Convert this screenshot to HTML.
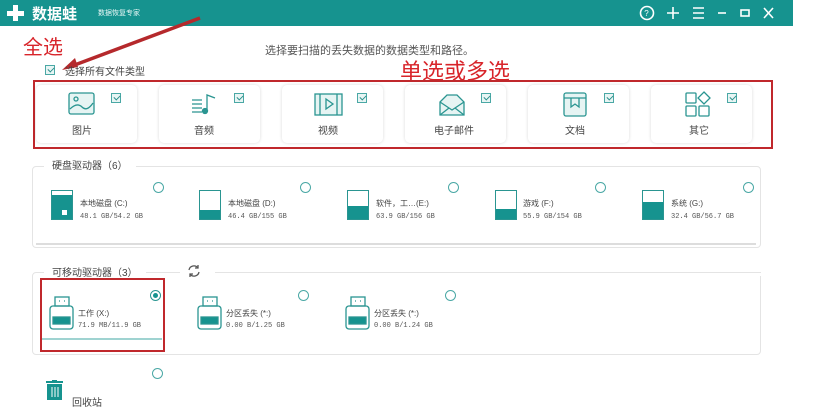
<!DOCTYPE html>
<html><head><meta charset="utf-8">
<style>
*{margin:0;padding:0;box-sizing:border-box}
body{width:815px;height:400px;overflow:hidden;background:#fff;font-family:"Liberation Sans","Noto Sans CJK SC",sans-serif;position:relative;color:#444}
.a{position:absolute}
.bar{left:0;top:0;width:793px;height:26px;background:#16938f}
.t{font-size:10px;color:#444;white-space:nowrap}
.s{font-size:7px;color:#555;white-space:nowrap;font-family:"Liberation Mono","Noto Sans CJK SC",monospace}
.card{background:#fff;border-radius:5px;box-shadow:0 0 3px rgba(0,0,0,.15);width:101px;height:58px;top:85px}
.cb{width:10px;height:10px;border:1px solid #4aa8a5;background:#e8f5f4}
.cb:after{content:"";position:absolute;left:2px;top:1px;width:5px;height:3px;border-left:1.5px solid #2b8f8b;border-bottom:1.5px solid #2b8f8b;transform:rotate(-45deg)}
.rad{width:11px;height:11px;border:1.3px solid #4aa8a5;border-radius:50%;background:#fff}
.disk{width:22px;height:30px;border:1.5px solid #2a9591;background:#fff}
.disk i{position:absolute;left:0;right:0;bottom:0;background:#16938f}
.grp{border:1px solid #e4e4e4;border-radius:4px}
.red{border:2px solid #c0282c}
</style></head><body>
<div class="a bar"></div>
<svg class="a" style="left:6px;top:4px" width="20" height="18"><path d="M7 1h5v6h6v5h-6v5H7v-5H1V7h6z" fill="#fff"/></svg>
<div class="a" style="left:32px;top:3px;font-size:15px;font-weight:bold;color:#fff">数据蛙</div>
<div class="a" style="left:98px;top:8px;font-size:7px;color:#e8f7f6">数据恢复专家</div>
<svg class="a" style="left:638px;top:4px" width="150" height="18" fill="none" stroke="#fff" stroke-width="1.6">
<circle cx="9" cy="9" r="6.5"/><text x="6.3" y="12" font-size="8" fill="#fff" stroke="none" font-family="Liberation Sans">?</text>
<path d="M35 3v12M29 9h12"/><path d="M55 4h11M55 9h11M55 14h11"/><path d="M80 9h8"/><rect x="103" y="6" width="8" height="6"/><path d="M126 4l9 10M135 4l-9 10"/>
</svg>
<div class="a" style="left:23px;top:31px;font-size:20px;color:#d8242a">全选</div>
<div class="a t" style="left:265px;top:42px;font-size:11px;color:#555">选择要扫描的丢失数据的数据类型和路径。</div>
<div class="a" style="left:400px;top:54px;font-size:22px;color:#d8242a">单选或多选</div>
<svg class="a" style="left:0;top:0" width="815" height="400"><path d="M200 18L72 66" stroke="#b5292c" stroke-width="3.5"/><path d="M62 70l13-12 3 9z" fill="#b5292c"/></svg>
<div class="a cb" style="left:45px;top:65px"></div>
<div class="a t" style="left:65px;top:63px">选择所有文件类型</div>
<div class="a red" style="left:33px;top:80px;width:740px;height:69px"></div>

<div class="a card" style="left:36px"></div>
<div class="a card" style="left:159px"></div>
<div class="a card" style="left:282px"></div>
<div class="a card" style="left:405px"></div>
<div class="a card" style="left:528px"></div>
<div class="a card" style="left:651px"></div>
<div class="a cb" style="left:111px;top:93px"></div>
<div class="a cb" style="left:234px;top:93px"></div>
<div class="a cb" style="left:357px;top:93px"></div>
<div class="a cb" style="left:481px;top:93px"></div>
<div class="a cb" style="left:604px;top:93px"></div>
<div class="a cb" style="left:727px;top:93px"></div>
<svg class="a" style="left:0;top:90px" width="815" height="30" fill="none" stroke="#2a9591" stroke-width="1.3">
<rect x="69" y="3" width="25" height="21" rx="2" fill="#e6f4f3"/><circle cx="76" cy="9" r="2"/><path d="M70 19q7-7 12-2t11-4"/>
<path d="M192 10h10M192 14h10M192 18h10M192 22h10"/><path d="M207 22V5l8 3"/><circle cx="205" cy="21" r="2.5" fill="#2a9591"/>
<rect x="315" y="4" width="27" height="21" fill="#e6f4f3"/><path d="M320 4v21M337 4v21"/><path d="M326 9v10l7-5z"/>
<path d="M440 12l7-7h10l7 7v13h-24z" fill="#e6f4f3"/><path d="M440 12l12 8 12-8M440 25l9-7M464 25l-9-7"/>
<rect x="564" y="3" width="22" height="23" rx="2" fill="#e6f4f3"/><path d="M564 8h22M571 8v9l4-3 4 3V8"/>
<rect x="686" y="3" width="10" height="10" rx="1"/><path d="M704 2l6 6-6 6-6-6z"/><rect x="686" y="16" width="10" height="10" rx="1"/><rect x="699" y="16" width="10" height="10" rx="1"/>
</svg>
<div class="a t" style="left:72px;top:122px">图片</div>
<div class="a t" style="left:194px;top:122px">音频</div>
<div class="a t" style="left:318px;top:122px">视频</div>
<div class="a t" style="left:434px;top:122px">电子邮件</div>
<div class="a t" style="left:565px;top:122px">文档</div>
<div class="a t" style="left:689px;top:122px">其它</div>

<div class="a grp" style="left:32px;top:166px;width:729px;height:82px"></div>
<div class="a" style="left:36px;top:243px;width:720px;height:2px;background:#ddd"></div>
<div class="a" style="left:44px;top:156px;background:#fff;padding:0 8px" ><span class="t">硬盘驱动器（6）</span></div>

<div class="a disk" style="left:51px;top:190px"><i style="top:4px"></i></div>
<div class="a" style="left:62px;top:210px;width:5px;height:5px;background:#fff"></div>
<div class="a disk" style="left:199px;top:190px"><i style="height:9px"></i></div>
<div class="a disk" style="left:347px;top:190px"><i style="height:13px"></i></div>
<div class="a disk" style="left:495px;top:190px"><i style="height:10px"></i></div>
<div class="a disk" style="left:642px;top:190px"><i style="height:17px"></i></div>
<div class="a t" style="left:80px;top:198px;font-size:8px">本地磁盘 (C:)</div><div class="a s" style="left:80px;top:213px">48.1 GB/54.2 GB</div>
<div class="a t" style="left:228px;top:198px;font-size:8px">本地磁盘 (D:)</div><div class="a s" style="left:228px;top:213px">46.4 GB/155 GB</div>
<div class="a t" style="left:376px;top:198px;font-size:8px">软件，工…(E:)</div><div class="a s" style="left:376px;top:213px">63.9 GB/156 GB</div>
<div class="a t" style="left:523px;top:198px;font-size:8px">游戏 (F:)</div><div class="a s" style="left:523px;top:213px">55.9 GB/154 GB</div>
<div class="a t" style="left:671px;top:198px;font-size:8px">系统 (G:)</div><div class="a s" style="left:671px;top:213px">32.4 GB/56.7 GB</div>
<div class="a rad" style="left:153px;top:182px"></div>
<div class="a rad" style="left:300px;top:182px"></div>
<div class="a rad" style="left:448px;top:182px"></div>
<div class="a rad" style="left:595px;top:182px"></div>
<div class="a rad" style="left:743px;top:182px"></div>

<div class="a grp" style="left:32px;top:272px;width:729px;height:83px"></div>
<div class="a" style="left:44px;top:263px;background:#fff;padding:0 8px"><span class="t">可移动驱动器（3）</span></div>
<div class="a" style="left:180px;top:262px;width:600px;height:14px;background:#fff"></div>
<div class="a" style="left:215px;top:272px;width:546px;height:1px;background:#e4e4e4"></div>
<svg class="a" style="left:187px;top:264px" width="14" height="14" fill="none" stroke="#555" stroke-width="1.3"><path d="M2 6a5 5 0 0 1 9-2M12 8a5 5 0 0 1-9 2"/><path d="M11 1v3H8M3 13v-3h3"/></svg>
<div class="a" style="left:42px;top:338px;width:120px;height:1.5px;background:#9fd3d1"></div>
<div class="a red" style="left:40px;top:278px;width:125px;height:74px"></div>
<svg class="a" style="left:0;top:294px" width="400" height="40" fill="none" stroke="#2a9591" stroke-width="1.3">
<rect x="55" y="3" width="14" height="9" fill="#fff"/><path d="M59 7h1M64 7h1"/><rect x="50" y="12" width="23" height="23" rx="3"/><rect x="53" y="23" width="17" height="7" fill="#16938f"/>
<rect x="203" y="3" width="14" height="9"/><path d="M207 7h1M212 7h1"/><rect x="198" y="12" width="23" height="23" rx="3"/><rect x="201" y="23" width="17" height="7" fill="#16938f"/>
<rect x="351" y="3" width="14" height="9"/><path d="M355 7h1M360 7h1"/><rect x="346" y="12" width="23" height="23" rx="3"/><rect x="349" y="23" width="17" height="7" fill="#16938f"/>
</svg>
<div class="a t" style="left:78px;top:308px;font-size:8px">工作 (X:)</div><div class="a s" style="left:78px;top:322px">71.9 MB/11.9 GB</div>
<div class="a t" style="left:226px;top:308px;font-size:8px">分区丢失 (*:)</div><div class="a s" style="left:226px;top:322px">0.00 B/1.25 GB</div>
<div class="a t" style="left:374px;top:308px;font-size:8px">分区丢失 (*:)</div><div class="a s" style="left:374px;top:322px">0.00 B/1.24 GB</div>
<div class="a rad" style="left:150px;top:290px;border-color:#2a9591"></div><div class="a" style="left:153px;top:293px;width:5px;height:5px;border-radius:50%;background:#16938f"></div>
<div class="a rad" style="left:298px;top:290px"></div>
<div class="a rad" style="left:445px;top:290px"></div>

<div class="a rad" style="left:152px;top:368px"></div>
<svg class="a" style="left:45px;top:380px" width="20" height="20"><rect x="1" y="1" width="17" height="2" fill="#16938f"/><rect x="7" y="0" width="5" height="2" fill="#16938f"/><rect x="2" y="4" width="15" height="16" fill="#16938f"/><path d="M7 7v10M10 7v10M13 7v10" stroke="#fff" stroke-width="1"/></svg>
<div class="a t" style="left:72px;top:394px">回收站</div>
</body></html>
